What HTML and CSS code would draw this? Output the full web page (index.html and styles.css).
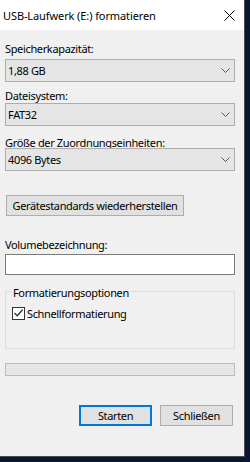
FILE: index.html
```html
<!DOCTYPE html>
<html lang="de">
<head>
<meta charset="utf-8">
<title>USB-Laufwerk (E:) formatieren</title>
<link rel="stylesheet" href="styles.css">
</head>
<body>
<div class="window">
  <div class="titlebar">
    <span class="title">USB-Laufwerk (E:) formatieren</span>
    <svg class="close" width="11" height="11" viewBox="0 0 11 11"><path d="M0.5 0.5 L10.5 10.5 M10.5 0.5 L0.5 10.5" stroke="#000" stroke-width="1" fill="none"/></svg>
  </div>
  <div class="content">
    <div class="label l1">Speicherkapazität:</div>
    <div class="combo c1"><span>1,88 GB</span><svg class="chev" width="9" height="5" viewBox="0 0 9 5"><path d="M0.5 0.5 L4.5 4.5 L8.5 0.5" stroke="#555" stroke-width="1" fill="none"/></svg></div>
    <div class="label l2">Dateisystem:</div>
    <div class="combo c2"><span>FAT32</span><svg class="chev" width="9" height="5" viewBox="0 0 9 5"><path d="M0.5 0.5 L4.5 4.5 L8.5 0.5" stroke="#555" stroke-width="1" fill="none"/></svg></div>
    <div class="label l3">Größe der Zuordnungseinheiten:</div>
    <div class="combo c3"><span>4096 Bytes</span><svg class="chev" width="9" height="5" viewBox="0 0 9 5"><path d="M0.5 0.5 L4.5 4.5 L8.5 0.5" stroke="#555" stroke-width="1" fill="none"/></svg></div>
    <div class="btn restore">Gerätestandards wiederherstellen</div>
    <div class="label l4">Volumebezeichnung:</div>
    <div class="input"></div>
    <fieldset class="group">
      <legend>Formatierungsoptionen</legend>
      <div class="check-row">
        <span class="checkbox"><svg width="11" height="11" viewBox="0 0 11 11"><path d="M1.5 5 L4.2 7.8 L9.6 1.8" stroke="#333" stroke-width="1.3" fill="none"/></svg></span>
        <span>Schnellformatierung</span>
      </div>
    </fieldset>
    <div class="progress"></div>
    <div class="actions">
      <div class="btn primary">Starten</div>
      <div class="btn">Schließen</div>
    </div>
  </div>
</div>
</body>
</html>
```

FILE: styles.css
```css
html, body {
  margin: 0;
  padding: 0;
}
body {
  background: #0b1631;
  width: 250px;
  height: 462px;
  overflow: hidden;
  font-family: "Noto Sans", "Open Sans", sans-serif;
  font-size: 11px;
  letter-spacing: -0.35px;
  color: #000;
}
.window {
  width: 244px;
  height: 456px;
  background: #f0f0f0;
  border-right: 1px solid #474c58;
  border-bottom: 1px solid #474c58;
  display: flex;
  flex-direction: column;
}
.titlebar {
  height: 30px;
  background: #fff;
  display: flex;
  align-items: center;
  padding-left: 3px;
  padding-top: 2px;
  box-sizing: border-box;
}
.title {
  line-height: 12px;
  letter-spacing: -0.1px;
}
.close {
  margin-left: auto;
  margin-right: 9px;
  margin-top: -2px;
}
.content {
  padding-left: 5px;
  width: 230px;
  display: flex;
  flex-direction: column;
}
.label {
  line-height: 12px;
  height: 12px;
  white-space: nowrap;
}
.l1 { margin-top: 13px; }
.l2 { margin-top: 8px; }
.l3 { margin-top: 11px; }
.l4 { margin-top: 23px; }
.combo {
  box-sizing: border-box;
  height: 23px;
  border: 1px solid #adadad;
  background: #e5e5e5;
  display: flex;
  align-items: center;
  padding-left: 2px;
  padding-right: 4px;
  line-height: 12px;
}
.combo .chev {
  margin-left: auto;
}
.c1 { margin-top: 4px; }
.c2 { margin-top: 1px; }
.c3 { margin-top: -1px; }
.btn {
  box-sizing: border-box;
  height: 21px;
  border: 1px solid #adadad;
  background: #e1e1e1;
  display: flex;
  align-items: center;
  justify-content: center;
  line-height: 12px;
  white-space: nowrap;
}
.restore {
  margin-top: 24px;
  margin-left: 1px;
  width: 178px;
}
.input {
  box-sizing: border-box;
  margin-top: 3px;
  height: 21px;
  border: 1px solid #7a7a7a;
  background: #fff;
}
.group {
  margin: 9px 0 0 0;
  padding: 8px 6px 28px 6px;
  border: 1px solid #dcdcdc;
  min-width: 0;
}
.group legend {
  padding: 3px 1px 0 1px;
  line-height: 12px;
}
.check-row {
  display: flex;
  align-items: center;
  height: 13px;
  line-height: 12px;
}
.checkbox {
  box-sizing: border-box;
  width: 13px;
  height: 13px;
  border: 1px solid #333;
  background: #fff;
  display: flex;
  align-items: center;
  justify-content: center;
  margin-right: 2px;
}
.progress {
  box-sizing: border-box;
  margin-top: 14px;
  height: 13px;
  border: 1px solid #bcbcbc;
  background: #e6e6e6;
}
.actions {
  margin-top: 29px;
  display: flex;
  gap: 8px;
  padding-left: 74px;
}
.actions .btn {
  width: 73px;
}
.btn.primary {
  border: 2px solid #0078d7;
}
```
